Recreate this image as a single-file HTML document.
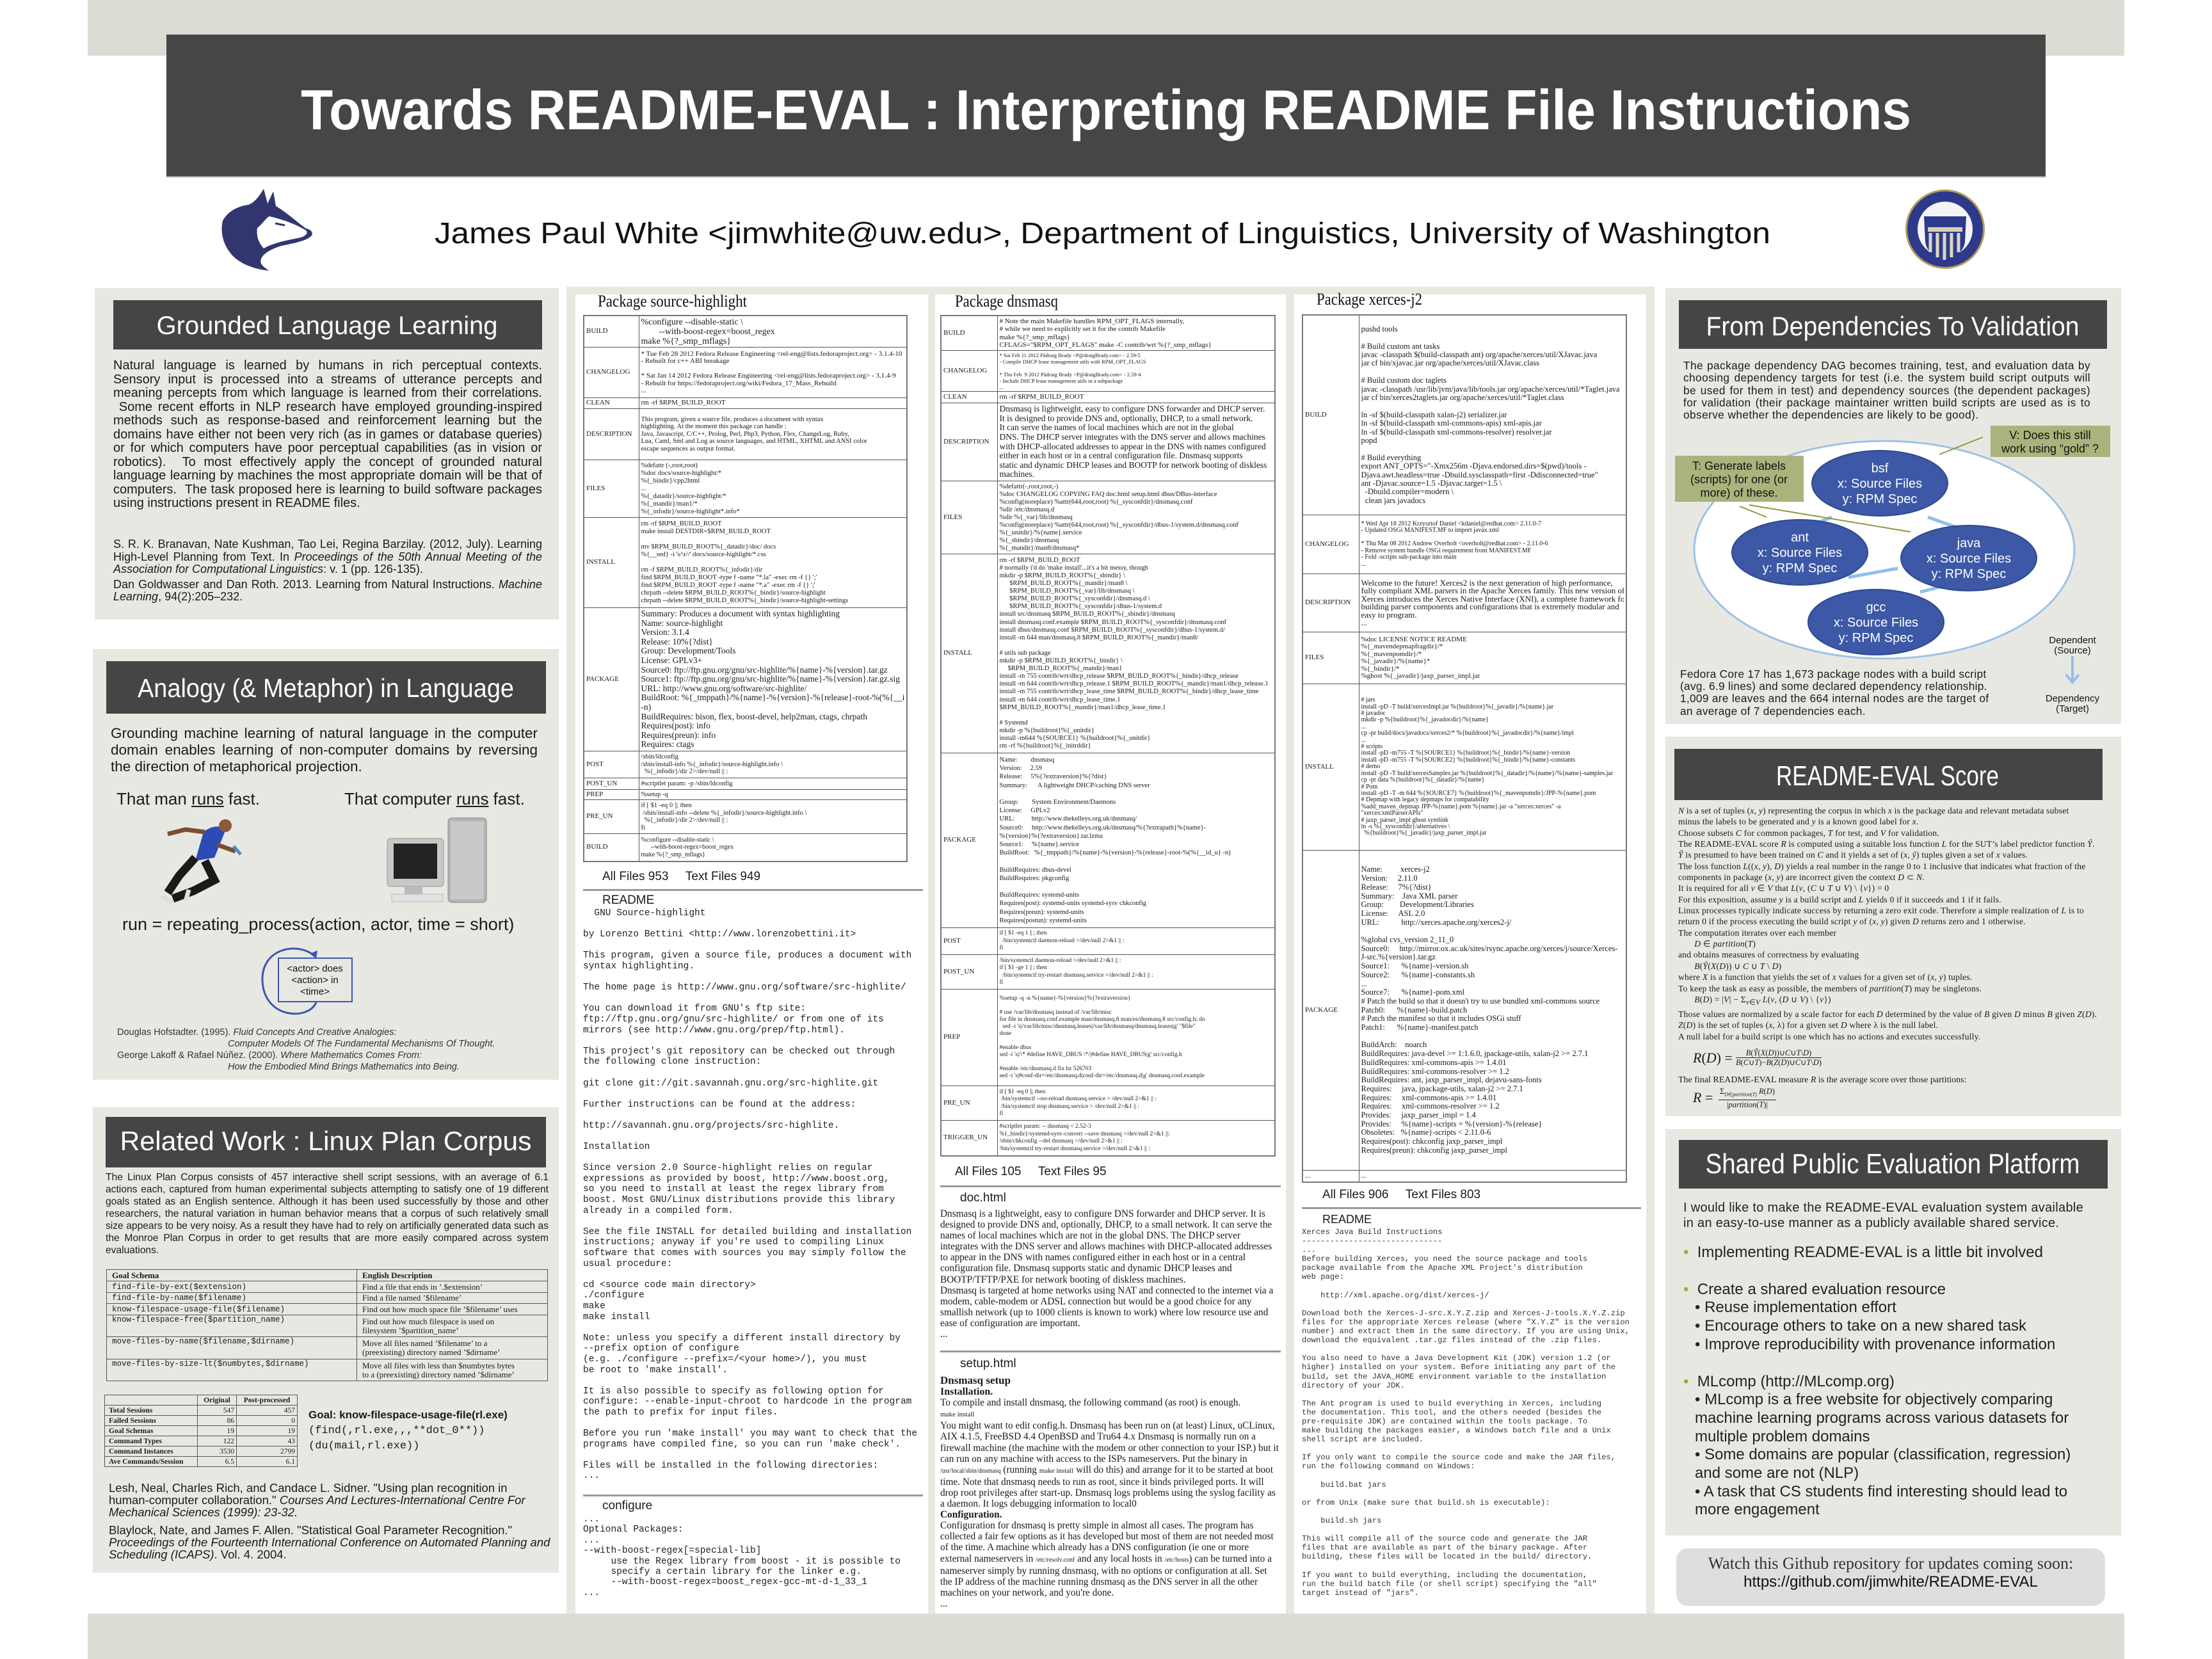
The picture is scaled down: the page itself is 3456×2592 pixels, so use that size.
<!DOCTYPE html>
<html><head><meta charset="utf-8">
<style>
*{margin:0;padding:0;box-sizing:border-box}
body{width:3456px;height:2592px;background:#fff;position:relative;overflow:hidden;font-family:"Liberation Sans",sans-serif;color:#1a1a1a}
.a{position:absolute}
.pn{position:absolute;background:#e8e8e3}
.bar{position:absolute;background:#454545}
.j{text-align:justify}
table.t{position:absolute;border-collapse:collapse;table-layout:fixed;font-family:"Liberation Serif",serif;border:2px solid #777}
table.t td{border:1px solid #555;vertical-align:middle;padding:0 3px;overflow:hidden}
table.t td.l{font-size:11px}
table.t td div{overflow:hidden;display:flex;flex-direction:column;justify-content:center;white-space:nowrap}
.mono{font-family:"Liberation Mono",monospace;white-space:pre}
.sr{font-family:"Liberation Serif",serif}
.rule{position:absolute;height:3px;background:#9a9a9a}
.sub{font-size:20px}
.dot{color:#8db33a}
</style></head><body>

<!-- top band & bottom strip -->
<div class="a" style="left:137px;top:0;width:3182px;height:87px;background:#dcdcd5"></div>
<div class="a" style="left:137px;top:2521px;width:3182px;height:71px;background:#dcdcd5"></div>
<div class="a" style="left:260px;top:54px;width:2936px;height:223px;background:#464646;border-bottom:2px solid #999"></div>

<!-- panels -->
<div class="pn" style="left:148px;top:450px;width:725px;height:518px"></div>
<div class="pn" style="left:145px;top:1014px;width:728px;height:673px"></div>
<div class="pn" style="left:145px;top:1730px;width:728px;height:727px"></div>
<div class="pn" style="left:885px;top:448px;width:1700px;height:2073px"></div>
<div class="a" style="left:899px;top:460px;width:551px;height:2061px;background:#fff"></div>
<div class="a" style="left:1461px;top:460px;width:548px;height:2061px;background:#fff"></div>
<div class="a" style="left:2022px;top:460px;width:550px;height:2061px;background:#fff"></div>
<div class="pn" style="left:2602px;top:450px;width:712px;height:681px"></div>
<div class="pn" style="left:2602px;top:1151px;width:712px;height:593px"></div>
<div class="pn" style="left:2602px;top:1764px;width:712px;height:635px"></div>

<div class="bar" style="left:177px;top:469px;width:670px;height:77px"></div>
<div class="bar" style="left:166px;top:1033px;width:687px;height:82px"></div>
<div class="bar" style="left:165px;top:1745px;width:688px;height:79px"></div>
<div class="bar" style="left:2623px;top:469px;width:669px;height:76px"></div>
<div class="bar" style="left:2616px;top:1170px;width:669px;height:80px"></div>
<div class="bar" style="left:2623px;top:1781px;width:670px;height:76px"></div>
<div class="a" style="left:2619px;top:2419px;width:670px;height:90px;background:#dedede;border-radius:18px"></div>

<!-- SVG overlay: headings, logos, diagrams -->
<svg class="a" style="left:0;top:0" width="3456" height="2592" xmlns="http://www.w3.org/2000/svg">
<g font-family="Liberation Sans, sans-serif" fill="#fff" text-anchor="middle">
<text x="1728" y="202" font-size="88" font-weight="bold" textLength="2516" lengthAdjust="spacingAndGlyphs">Towards README-EVAL : Interpreting README File Instructions</text>
<text x="511" y="522" font-size="40" textLength="533" lengthAdjust="spacingAndGlyphs">Grounded Language Learning</text>
<text x="509" y="1089" font-size="41" textLength="588" lengthAdjust="spacingAndGlyphs">Analogy (&amp; Metaphor) in Language</text>
<text x="509" y="1797" font-size="42" textLength="643" lengthAdjust="spacingAndGlyphs">Related Work : Linux Plan Corpus</text>
<text x="2957" y="524" font-size="42" textLength="583" lengthAdjust="spacingAndGlyphs">From Dependencies To Validation</text>
<text x="2949" y="1227" font-size="44" textLength="348" lengthAdjust="spacingAndGlyphs">README-EVAL Score</text>
<text x="2957" y="1833" font-size="44" textLength="585" lengthAdjust="spacingAndGlyphs">Shared Public Evaluation Platform</text>
</g>
<text x="679" y="380" font-family="Liberation Sans, sans-serif" font-size="46" fill="#111" textLength="2087" lengthAdjust="spacingAndGlyphs">James Paul White &lt;jimwhite@uw.edu&gt;, Department of Linguistics, University of Washington</text>
<g font-family="Liberation Serif, serif" font-size="26" fill="#111">
<text x="934" y="479" textLength="233" lengthAdjust="spacingAndGlyphs">Package source-highlight</text>
<text x="1492" y="479" textLength="161" lengthAdjust="spacingAndGlyphs">Package dnsmasq</text>
<text x="2057" y="476" textLength="165" lengthAdjust="spacingAndGlyphs">Package xerces-j2</text>
</g>
<!-- husky -->
<path d="M412,295 L418,318 L427,299 L431,322 C445,330 462,345 478,357 C484,358 490,362 487,368 C480,376 460,380 440,384 C420,390 404,400 408,412 C412,418 418,421 420,423 C395,420 375,412 362,398 C348,382 344,362 348,345 C356,330 372,322 388,320 C398,316 404,308 412,295 Z" fill="#33366e"/>
<path d="M420,338 C440,342 462,350 478,360 C482,364 478,368 470,371 C452,375 430,378 412,388 C404,380 400,368 402,356 C408,352 412,345 420,338 Z" fill="#fff"/>
<path d="M430,349 L445,352" stroke="#33366e" stroke-width="3"/>
<!-- seal -->
<circle cx="3039" cy="358" r="62" fill="#b59a5a"/>
<circle cx="3039" cy="358" r="59" fill="#2d3a8c"/>
<circle cx="3039" cy="358" r="43" fill="#f4f4f8"/>
<path d="M3006,338 L3072,338 L3070,378 C3068,395 3050,405 3039,410 C3028,405 3010,395 3008,378 Z" fill="#2d3a8c"/>
<rect x="3012" y="355" width="54" height="7" fill="#d8d0b0"/>
<path d="M3016,364 v30 M3027,364 v38 M3038,364 v42 M3049,364 v38 M3060,364 v30" stroke="#ddd6bd" stroke-width="5"/>
<!-- dependency diagram -->
<ellipse cx="2944" cy="859" rx="297" ry="170" fill="#fff" stroke="#9cc3e6" stroke-width="3"/>
<g stroke="#8fc0ea" stroke-width="5" fill="none">
<path d="M2862,808 L2815,826"/><path d="M3012,808 L3063,826"/><path d="M2888,902 L2965,888"/><path d="M3074,906 L3000,925"/>
</g>
<g stroke="#8a9a3a" stroke-width="2" fill="none"><path d="M2718,791 L2760,808"/><path d="M2733,789 L2985,831"/><path d="M3098,683 L3030,710"/></g>
<g fill="#3c58a6" stroke="#2e4a90" stroke-width="2">
<ellipse cx="2937" cy="755" rx="106" ry="51"/><ellipse cx="2812" cy="863" rx="106" ry="51"/>
<ellipse cx="3076" cy="872" rx="106" ry="51"/><ellipse cx="2931" cy="972" rx="106" ry="51"/>
</g>
<g font-family="Liberation Sans, sans-serif" font-size="20" fill="#fff" text-anchor="middle">
<text x="2937" y="738">bsf</text><text x="2937" y="762">x: Source Files</text><text x="2937" y="786">y: RPM Spec</text>
<text x="2812" y="846">ant</text><text x="2812" y="870">x: Source Files</text><text x="2812" y="894">y: RPM Spec</text>
<text x="3076" y="855">java</text><text x="3076" y="879">x: Source Files</text><text x="3076" y="903">y: RPM Spec</text>
<text x="2931" y="955">gcc</text><text x="2931" y="979">x: Source Files</text><text x="2931" y="1003">y: RPM Spec</text>
</g>
<rect x="2617" y="712" width="201" height="72" fill="#a9b47c"/>
<rect x="3110" y="665" width="187" height="49" fill="#a9b47c"/>
<g font-family="Liberation Sans, sans-serif" font-size="18" fill="#111" text-anchor="middle">
<text x="2717" y="734">T: Generate labels</text><text x="2717" y="755">(scripts) for one (or</text><text x="2717" y="776">more) of these.</text>
<text x="3203" y="686">V: Does this still</text><text x="3203" y="707">work using “gold” ?</text>
<text x="3238" y="1005" font-size="15">Dependent</text><text x="3238" y="1021" font-size="15">(Source)</text>
<text x="3238" y="1096" font-size="15">Dependency</text><text x="3238" y="1112" font-size="15">(Target)</text>
</g>
<path d="M3238,1025 L3238,1065 M3228,1054 L3238,1066 L3248,1054" stroke="#8fc0ea" stroke-width="4" fill="none"/>
<!-- cycle -->
<path d="M494,1566 C482,1595 412,1592 410,1532 C408,1482 465,1470 492,1494" stroke="#3b57b0" stroke-width="3" fill="none"/>
<path d="M484,1490 L494,1498 L496,1485 Z" fill="#3b57b0"/>
<rect x="435" y="1497" width="115" height="68" fill="#e8e8e3" stroke="#3b57b0" stroke-width="2"/>
<g font-family="Liberation Sans, sans-serif" font-size="15" fill="#111" text-anchor="middle">
<text x="492" y="1518">&lt;actor&gt; does</text><text x="492" y="1536">&lt;action&gt; in</text><text x="492" y="1554">&lt;time&gt;</text></g>
<!-- runner -->
<g>
<path d="M318,1300 C330,1290 345,1288 352,1298 L335,1340 L305,1345 Z" fill="#2b4bb5"/>
<circle cx="352" cy="1290" r="10" fill="#8a5a3a"/>
<path d="M320,1300 L290,1296 L262,1303 M340,1320 L368,1330" stroke="#7a4e30" stroke-width="7" fill="none"/>
<path d="M305,1340 L280,1368 L262,1395 M320,1345 L335,1375 L302,1392 L270,1404" stroke="#1a1a1a" stroke-width="13" fill="none"/>
<path d="M252,1400 L270,1410 M295,1390 L290,1408" stroke="#ddd" stroke-width="7"/>
<path d="M365,1322 L376,1335" stroke="#4a8fd0" stroke-width="5"/>
</g>
<!-- computer -->
<g>
<rect x="605" y="1310" width="88" height="75" rx="5" fill="#c8c8c8" stroke="#999"/>
<rect x="615" y="1318" width="68" height="55" fill="#222"/>
<rect x="632" y="1385" width="28" height="12" fill="#bbb"/>
<rect x="612" y="1397" width="80" height="12" fill="#e2e2e2" stroke="#bbb"/>
<rect x="700" y="1278" width="60" height="132" rx="6" fill="#b5b5b5" stroke="#888"/>
<rect x="704" y="1283" width="52" height="122" fill="#c9c9c9"/>
</g>
</svg>

<!-- Panel 1 -->
<div class="a j" style="left:177px;top:561px;width:670px;font-size:20px;line-height:21.5px">Natural language is learned by humans in rich perceptual contexts. Sensory input is processed into a streams of utterance percepts and meaning percepts from which language is learned from their correlations. &nbsp;Some recent efforts in NLP research have employed grounding-inspired methods such as response-based and reinforcement learning but the domains have either not been very rich (as in games or database queries) or for which computers have poor perceptual capabilities (as in vision or robotics). &nbsp;To most effectively apply the concept of grounded natural language learning by machines the most appropriate domain will be that of computers. &nbsp;The task proposed here is learning to build software packages using instructions present in README files.</div>
<div class="a j" style="left:177px;top:841px;width:670px;font-size:18px;line-height:19.5px">S. R. K. Branavan, Nate Kushman, Tao Lei, Regina Barzilay. (2012, July). Learning High-Level Planning from Text. In <i>Proceedings of the 50th Annual Meeting of the Association for Computational Linguistics</i>: v. 1 (pp. 126-135).<div style="height:4px"></div>Dan Goldwasser and Dan Roth. 2013. Learning from Natural Instructions. <i>Machine Learning</i>, 94(2):205–232.</div>

<!-- Panel 2 -->
<div class="a j" style="left:173px;top:1133px;width:667px;font-size:22.5px;line-height:26px">Grounding machine learning of natural language in the computer domain enables learning of non-computer domains by reversing the direction of metaphorical projection.</div>
<div class="a" style="left:182px;top:1233px;font-size:26px">That man <u>runs</u> fast.</div>
<div class="a" style="left:538px;top:1233px;font-size:26px">That computer <u>runs</u> fast.</div>
<div class="a" style="left:191px;top:1429px;font-size:27px">run = repeating_process(action, actor, time = short)</div>
<div class="a" style="left:183px;top:1604px;font-size:14.5px;line-height:18px;color:#333">Douglas Hofstadter. (1995). <i>Fluid Concepts And Creative Analogies:</i><br><i style="padding-left:173px">Computer Models Of The Fundamental Mechanisms Of Thought.</i><br>George Lakoff &amp; Rafael Núñez. (2000). <i>Where Mathematics Comes From:</i><br><i style="padding-left:173px">How the Embodied Mind Brings Mathematics into Being.</i></div>

<!-- Panel 3 -->
<div class="a j" style="left:165px;top:1830px;width:692px;font-size:15.6px;line-height:19px">The Linux Plan Corpus consists of 457 interactive shell script sessions, with an average of 6.1 actions each, captured from human experimental subjects attempting to satisfy one of 19 different goals stated as an English sentence. Although it has been used successfully by those and other researchers, the natural variation in human behavior means that a corpus of such relatively small size appears to be very noisy. As a result they have had to rely on artificially generated data such as the Monroe Plan Corpus in order to get results that are more easily compared across system evaluations.</div>
<table class="t" style="left:166px;top:1983px;width:690px;font-size:13px;line-height:14px;border:1px solid #333">
<col style="width:391px"><col>
<tr><td style="height:18px;padding-left:8px"><b>Goal Schema</b></td><td style="padding-left:8px"><b>English Description</b></td></tr>
<tr><td class="mono" style="height:18px;padding-left:8px;font-size:12.5px">find-file-by-ext($extension)</td><td style="padding-left:8px">Find a file that ends in ’.$extension’</td></tr>
<tr><td class="mono" style="height:17px;padding-left:8px;font-size:12.5px">find-file-by-name($filename)</td><td style="padding-left:8px">Find a file named ’$filename’</td></tr>
<tr><td class="mono" style="height:18px;padding-left:8px;font-size:12.5px">know-filespace-usage-file($filename)</td><td style="padding-left:8px">Find out how much space file ’$filename’ uses</td></tr>
<tr><td class="mono" style="height:34px;padding-left:8px;font-size:12.5px;vertical-align:top">know-filespace-free($partition_name)</td><td style="padding-left:8px">Find out how much filespace is used on<br>filesystem ’$partition_name’</td></tr>
<tr><td class="mono" style="height:35px;padding-left:8px;font-size:12.5px;vertical-align:top">move-files-by-name($filename,$dirname)</td><td style="padding-left:8px">Move all files named ’$filename’ to a<br>(preexisting) directory named ’$dirname’</td></tr>
<tr><td class="mono" style="height:34px;padding-left:8px;font-size:12.5px;vertical-align:top">move-files-by-size-lt($numbytes,$dirname)</td><td style="padding-left:8px">Move all files with less than $numbytes bytes<br>to a (preexisting) directory named ’$dirname’</td></tr>
</table>
<table class="t" style="left:163px;top:2179px;width:302px;font-size:11.5px;line-height:12px;border:1px solid #333">
<col style="width:145px"><col style="width:61px"><col>
<tr><td style="height:16px"></td><td style="text-align:center"><b>Original</b></td><td style="text-align:center"><b>Post-processed</b></td></tr>
<tr><td style="height:16px;padding-left:6px"><b>Total Sessions</b></td><td style="text-align:right">547</td><td style="text-align:right">457</td></tr>
<tr><td style="height:16px;padding-left:6px"><b>Failed Sessions</b></td><td style="text-align:right">86</td><td style="text-align:right">0</td></tr>
<tr><td style="height:16px;padding-left:6px"><b>Goal Schemas</b></td><td style="text-align:right">19</td><td style="text-align:right">19</td></tr>
<tr><td style="height:16px;padding-left:6px"><b>Command Types</b></td><td style="text-align:right">122</td><td style="text-align:right">43</td></tr>
<tr><td style="height:16px;padding-left:6px"><b>Command Instances</b></td><td style="text-align:right">3530</td><td style="text-align:right">2799</td></tr>
<tr><td style="height:16px;padding-left:6px"><b>Ave Commands/Session</b></td><td style="text-align:right">6.5</td><td style="text-align:right">6.1</td></tr>
</table>
<div class="a" style="left:482px;top:2200px;font-size:17px;line-height:22.5px"><b>Goal: know-filespace-usage-file(rl.exe)</b><br><span class="mono" style="font-size:17px">(find(,rl.exe,,,**dot_0**))<br>(du(mail,rl.exe))</span></div>
<div class="a" style="left:170px;top:2315px;width:690px;font-size:18.5px;line-height:19px">Lesh, Neal, Charles Rich, and Candace L. Sidner. "Using plan recognition in human-computer collaboration." <i>Courses And Lectures-International Centre For Mechanical Sciences (1999): 23-32.</i><div style="height:9px"></div>Blaylock, Nate, and James F. Allen. "Statistical Goal Parameter Recognition." <i>Proceedings of the Fourteenth International Conference on Automated Planning and Scheduling (ICAPS)</i>. Vol. 4. 2004.</div>

<!-- Column 1: source-highlight -->
<table class="t" style="left:911px;top:492px;width:507px;font-size:11px;line-height:11.5px">
<col style="width:86px"><col>
<tr><td class="l">BUILD</td><td><div style="height:48px;font-size:14px;line-height:15px">%configure --disable-static \<br>&nbsp;&nbsp;&nbsp;&nbsp;&nbsp;&nbsp;&nbsp;&nbsp;--with-boost-regex=boost_regex<br>make %{?_smp_mflags}</div></td></tr>
<tr><td class="l">CHANGELOG</td><td><div style="height:78px">* Tue Feb 28 2012 Fedora Release Engineering &lt;rel-eng@lists.fedoraproject.org&gt; - 3.1.4-10<br>- Rebuilt for c++ ABI breakage<br><br>* Sat Jan 14 2012 Fedora Release Engineering &lt;rel-eng@lists.fedoraproject.org&gt; - 3.1.4-9<br>- Rebuilt for https://fedoraproject.org/wiki/Fedora_17_Mass_Rebuild<br>...</div></td></tr>
<tr><td class="l">CLEAN</td><td><div style="height:16px">rm -rf $RPM_BUILD_ROOT</div></td></tr>
<tr><td class="l">DESCRIPTION</td><td><div style="height:79px;font-size:10.5px">This program, given a source file, produces a document with syntax<br>highlighting. At the moment this package can handle :<br>Java, Javascript, C/C++, Prolog, Perl, Php3, Python, Flex, ChangeLog, Ruby,<br>Lua, Caml, Sml and Log as source languages, and HTML, XHTML and ANSI color<br>escape sequences as output format.</div></td></tr>
<tr><td class="l">FILES</td><td><div style="height:89px;font-size:10.5px;line-height:12px">%defattr (-,root,root)<br>%doc docs/source-highlight/*<br>%{_bindir}/cpp2html<br>...<br>%{_datadir}/source-highlight/*<br>%{_mandir}/man1/*<br>%{_infodir}/source-highlight*.info*</div></td></tr>
<tr><td class="l">INSTALL</td><td><div style="height:140px;font-size:10.5px;line-height:12px">rm -rf $RPM_BUILD_ROOT<br>make install DESTDIR=$RPM_BUILD_ROOT<br><br>mv $RPM_BUILD_ROOT%{_datadir}/doc/ docs<br>%{__sed} -i 's/\r//' docs/source-highlight/*.css<br><br>rm -f $RPM_BUILD_ROOT%{_infodir}/dir<br>find $RPM_BUILD_ROOT -type f -name "*.la" -exec rm -f {} ';'<br>find $RPM_BUILD_ROOT -type f -name "*.a" -exec rm -f {} ';'<br>chrpath --delete $RPM_BUILD_ROOT%{_bindir}/source-highlight<br>chrpath --delete $RPM_BUILD_ROOT%{_bindir}/source-highlight-settings</div></td></tr>
<tr><td class="l">PACKAGE</td><td><div style="height:223px;font-size:13.5px;line-height:14.6px">Summary: Produces a document with syntax highlighting<br>Name: source-highlight<br>Version: 3.1.4<br>Release: 10%{?dist}<br>Group: Development/Tools<br>License: GPLv3+<br>Source0: ftp://ftp.gnu.org/gnu/src-highlite/%{name}-%{version}.tar.gz<br>Source1: ftp://ftp.gnu.org/gnu/src-highlite/%{name}-%{version}.tar.gz.sig<br>URL: http://www.gnu.org/software/src-highlite/<br>BuildRoot: %{_tmppath}/%{name}-%{version}-%{release}-root-%(%{__id_u}<br>-n)<br>BuildRequires: bison, flex, boost-devel, help2man, ctags, chrpath<br>Requires(post): info<br>Requires(preun): info<br>Requires: ctags</div></td></tr>
<tr><td class="l">POST</td><td><div style="height:41px;font-size:10.5px">/sbin/ldconfig<br>/sbin/install-info %{_infodir}/source-highlight.info \<br>&nbsp;&nbsp;%{_infodir}/dir 2&gt;/dev/null || :</div></td></tr>
<tr><td class="l">POST_UN</td><td><div style="height:17px;font-size:10.5px">#scriptlet param: -p /sbin/ldconfig</div></td></tr>
<tr><td class="l">PREP</td><td><div style="height:15px;font-size:10.5px">%setup -q</div></td></tr>
<tr><td class="l">PRE_UN</td><td><div style="height:52px;font-size:10.5px">if [ $1 -eq 0 ]; then<br>&nbsp;/sbin/install-info --delete %{_infodir}/source-highlight.info \<br>&nbsp;&nbsp;%{_infodir}/dir 2&gt;/dev/null || :<br>fi</div></td></tr>
<tr><td class="l">BUILD</td><td><div style="height:42px;font-size:10px">%configure --disable-static \<br>&nbsp;&nbsp;&nbsp;&nbsp;&nbsp;&nbsp;--with-boost-regex=boost_regex<br>make %{?_smp_mflags}</div></td></tr>
</table>
<div class="a sub" style="left:941px;top:1359px;font-size:19px">All Files 953 &nbsp;&nbsp;&nbsp;&nbsp;Text Files 949</div>
<div class="rule" style="left:911px;top:1389px;width:531px"></div>
<div class="a" style="left:941px;top:1396px;font-size:19px">README</div>
<div class="a mono" style="left:911px;top:1419px;font-size:14.5px;line-height:16.6px;color:#222">  GNU Source-highlight

by Lorenzo Bettini &lt;http://www.lorenzobettini.it&gt;

This program, given a source file, produces a document with
syntax highlighting.

The home page is http://www.gnu.org/software/src-highlite/

You can download it from GNU's ftp site:
ftp://ftp.gnu.org/gnu/src-highlite/ or from one of its
mirrors (see http://www.gnu.org/prep/ftp.html).

This project's git repository can be checked out through
the following clone instruction:

git clone git://git.savannah.gnu.org/src-highlite.git

Further instructions can be found at the address:

http://savannah.gnu.org/projects/src-highlite.

Installation

Since version 2.0 Source-highlight relies on regular
expressions as provided by boost, http://www.boost.org,
so you need to install at least the regex library from
boost. Most GNU/Linux distributions provide this library
already in a compiled form.

See the file INSTALL for detailed building and installation
instructions; anyway if you're used to compiling Linux
software that comes with sources you may simply follow the
usual procedure:

cd &lt;source code main directory&gt;
./configure
make
make install

Note: unless you specify a different install directory by
--prefix option of configure
(e.g. ./configure --prefix=/&lt;your home&gt;/), you must
be root to 'make install'.

It is also possible to specify as following option for
configure: --enable-input-chroot to hardcode in the program
the path to prefix for input files.

Before you run 'make install' you may want to check that the
programs have compiled fine, so you can run 'make check'.

Files will be installed in the following directories:
...</div>
<div class="rule" style="left:911px;top:2335px;width:531px"></div>
<div class="a" style="left:941px;top:2342px;font-size:19px">configure</div>
<div class="a mono" style="left:911px;top:2366px;font-size:14.5px;line-height:16.4px;color:#222">...
Optional Packages:
...
--with-boost-regex[=special-lib]
     use the Regex library from boost - it is possible to
     specify a certain library for the linker e.g.
     --with-boost-regex=boost_regex-gcc-mt-d-1_33_1
...</div>

<!-- Column 2: dnsmasq -->
<table class="t" style="left:1469px;top:492px;width:524px;font-size:11px;line-height:11.5px">
<col style="width:88px"><col>
<tr><td class="l">BUILD</td><td><div style="height:53px;font-size:11px;line-height:12.5px"># Note the main Makefile handles RPM_OPT_FLAGS internally,<br># while we need to explicitly set it for the contrib Makefile<br>make %{?_smp_mflags}<br>CFLAGS="$RPM_OPT_FLAGS" make -C contrib/wrt %{?_smp_mflags}</div></td></tr>
<tr><td class="l">CHANGELOG</td><td><div style="height:63px;font-size:8.5px;line-height:10px">* Sat Feb 11 2012 Pádraig Brady &lt;P@draigBrady.com&gt; - 2.59-5<br>- Compile DHCP lease management utils with RPM_OPT_FLAGS<br><br>* Thu Feb &nbsp;9 2012 Pádraig Brady &lt;P@draigBrady.com&gt; - 2.59-4<br>- Include DHCP lease management utils in a subpackage<br>...</div></td></tr>
<tr><td class="l">CLEAN</td><td><div style="height:17px">rm -rf $RPM_BUILD_ROOT</div></td></tr>
<tr><td class="l">DESCRIPTION</td><td><div style="height:121px;font-size:13.5px;line-height:14.6px">Dnsmasq is lightweight, easy to configure DNS forwarder and DHCP server.<br>It is designed to provide DNS and, optionally, DHCP, to a small network.<br>It can serve the names of local machines which are not in the global<br>DNS. The DHCP server integrates with the DNS server and allows machines<br>with DHCP-allocated addresses to appear in the DNS with names configured<br>either in each host or in a central configuration file. Dnsmasq supports<br>static and dynamic DHCP leases and BOOTP for network booting of diskless<br>machines.</div></td></tr>
<tr><td class="l">FILES</td><td><div style="height:113px;font-size:10.5px;line-height:12px">%defattr(-,root,root,-)<br>%doc CHANGELOG COPYING FAQ doc.html setup.html dbus/DBus-interface<br>%config(noreplace) %attr(644,root,root) %{_sysconfdir}/dnsmasq.conf<br>%dir /etc/dnsmasq.d<br>%dir %{_var}/lib/dnsmasq<br>%config(noreplace) %attr(644,root,root) %{_sysconfdir}/dbus-1/system.d/dnsmasq.conf<br>%{_unitdir}/%{name}.service<br>%{_sbindir}/dnsmasq<br>%{_mandir}/man8/dnsmasq*</div></td></tr>
<tr><td class="l">INSTALL</td><td><div style="height:310px;font-size:10.5px;line-height:12.1px">rm -rf $RPM_BUILD_ROOT<br># normally i'd do 'make install'...it's a bit messy, though<br>mkdir -p $RPM_BUILD_ROOT%{_sbindir} \<br>&nbsp;&nbsp;&nbsp;&nbsp;&nbsp;&nbsp;$RPM_BUILD_ROOT%{_mandir}/man8 \<br>&nbsp;&nbsp;&nbsp;&nbsp;&nbsp;&nbsp;$RPM_BUILD_ROOT%{_var}/lib/dnsmasq \<br>&nbsp;&nbsp;&nbsp;&nbsp;&nbsp;&nbsp;$RPM_BUILD_ROOT%{_sysconfdir}/dnsmasq.d \<br>&nbsp;&nbsp;&nbsp;&nbsp;&nbsp;&nbsp;$RPM_BUILD_ROOT%{_sysconfdir}/dbus-1/system.d<br>install src/dnsmasq $RPM_BUILD_ROOT%{_sbindir}/dnsmasq<br>install dnsmasq.conf.example $RPM_BUILD_ROOT%{_sysconfdir}/dnsmasq.conf<br>install dbus/dnsmasq.conf $RPM_BUILD_ROOT%{_sysconfdir}/dbus-1/system.d/<br>install -m 644 man/dnsmasq.8 $RPM_BUILD_ROOT%{_mandir}/man8/<br><br># utils sub package<br>mkdir -p $RPM_BUILD_ROOT%{_bindir} \<br>&nbsp;&nbsp;&nbsp;&nbsp;&nbsp;$RPM_BUILD_ROOT%{_mandir}/man1<br>install -m 755 contrib/wrt/dhcp_release $RPM_BUILD_ROOT%{_bindir}/dhcp_release<br>install -m 644 contrib/wrt/dhcp_release.1 $RPM_BUILD_ROOT%{_mandir}/man1/dhcp_release.1<br>install -m 755 contrib/wrt/dhcp_lease_time $RPM_BUILD_ROOT%{_bindir}/dhcp_lease_time<br>install -m 644 contrib/wrt/dhcp_lease_time.1<br>$RPM_BUILD_ROOT%{_mandir}/man1/dhcp_lease_time.1<br><br># Systemd<br>mkdir -p %{buildroot}%{_unitdir}<br>install -m644 %{SOURCE1} %{buildroot}%{_unitdir}<br>rm -rf %{buildroot}%{_initrddir}</div></td></tr>
<tr><td class="l">PACKAGE</td><td><div style="height:272px;font-size:10.5px;line-height:13.2px">Name: &nbsp;&nbsp;&nbsp;&nbsp;&nbsp;&nbsp;&nbsp;dnsmasq<br>Version: &nbsp;&nbsp;&nbsp;&nbsp;2.59<br>Release: &nbsp;&nbsp;&nbsp;&nbsp;5%{?extraversion}%{?dist}<br>Summary: &nbsp;&nbsp;&nbsp;&nbsp;&nbsp;A lightweight DHCP/caching DNS server<br><br>Group: &nbsp;&nbsp;&nbsp;&nbsp;&nbsp;&nbsp;&nbsp;System Environment/Daemons<br>License: &nbsp;&nbsp;&nbsp;&nbsp;GPLv2<br>URL: &nbsp;&nbsp;&nbsp;&nbsp;&nbsp;&nbsp;&nbsp;&nbsp;&nbsp;http://www.thekelleys.org.uk/dnsmasq/<br>Source0: &nbsp;&nbsp;&nbsp;&nbsp;http://www.thekelleys.org.uk/dnsmasq/%{?extrapath}%{name}-<br>%{version}%{?extraversion}.tar.lzma<br>Source1: &nbsp;&nbsp;&nbsp;&nbsp;%{name}.service<br>BuildRoot: &nbsp;&nbsp;%{_tmppath}/%{name}-%{version}-%{release}-root-%(%{__id_u} -n)<br><br>BuildRequires: dbus-devel<br>BuildRequires: pkgconfig<br><br>BuildRequires: systemd-units<br>Requires(post): systemd-units systemd-sysv chkconfig<br>Requires(preun): systemd-units<br>Requires(postun): systemd-units</div></td></tr>
<tr><td class="l">POST</td><td><div style="height:41px;font-size:9.5px">if [ $1 -eq 1 ] ; then<br>&nbsp;&nbsp;/bin/systemctl daemon-reload &gt;/dev/null 2&gt;&amp;1 || :<br>fi</div></td></tr>
<tr><td class="l">POST_UN</td><td><div style="height:53px;font-size:9.5px">/bin/systemctl daemon-reload &gt;/dev/null 2&gt;&amp;1 || :<br>if [ $1 -ge 1 ] ; then<br>&nbsp;&nbsp;/bin/systemctl try-restart dnsmasq.service &gt;/dev/null 2&gt;&amp;1 || :<br>fi</div></td></tr>
<tr><td class="l">PREP</td><td><div style="height:150px;font-size:9.5px;line-height:11px">%setup -q -n %{name}-%{version}%{?extraversion}<br><br># use /var/lib/dnsmasq instead of /var/lib/misc<br>for file in dnsmasq.conf.example man/dnsmasq.8 man/es/dnsmasq.8 src/config.h; do<br>&nbsp;&nbsp;sed -i 's|/var/lib/misc/dnsmasq.leases|/var/lib/dnsmasq/dnsmasq.leases|g' "$file"<br>done<br><br>#enable dbus<br>sed -i 's|/\* #define HAVE_DBUS \*/|#define HAVE_DBUS|g' src/config.h<br><br>#enable /etc/dnsmasq.d fix bz 526703<br>sed -i 's|#conf-dir=/etc/dnsmasq.d|conf-dir=/etc/dnsmasq.d|g' dnsmasq.conf.example</div></td></tr>
<tr><td class="l">PRE_UN</td><td><div style="height:53px;font-size:9.5px">if [ $1 -eq 0 ]; then<br>&nbsp;/bin/systemctl --no-reload dnsmasq.service &gt; /dev/null 2&gt;&amp;1 || :<br>&nbsp;/bin/systemctl stop dnsmasq.service &gt; /dev/null 2&gt;&amp;1 || :<br>fi</div></td></tr>
<tr><td class="l">TRIGGER_UN</td><td><div style="height:54px;font-size:9.5px">#scriptlet param: -- dnsmasq &lt; 2.52-3<br>%{_bindir}/systemd-sysv-convert --save dnsmasq &gt;/dev/null 2&gt;&amp;1 ||:<br>/sbin/chkconfig --del dnsmasq &gt;/dev/null 2&gt;&amp;1 || :<br>/bin/systemctl try-restart dnsmasq.service &gt;/dev/null 2&gt;&amp;1 || :</div></td></tr>
</table>
<div class="a" style="left:1492px;top:1820px;font-size:19px">All Files 105 &nbsp;&nbsp;&nbsp;&nbsp;Text Files 95</div>
<div class="rule" style="left:1469px;top:1852px;width:532px"></div>
<div class="a" style="left:1500px;top:1861px;font-size:19px">doc.html</div>
<div class="a sr" style="left:1469px;top:1888px;width:530px;font-size:15.3px;line-height:17.1px">Dnsmasq is a lightweight, easy to configure DNS forwarder and DHCP server. It is designed to provide DNS and, optionally, DHCP, to a small network. It can serve the names of local machines which are not in the global DNS. The DHCP server integrates with the DNS server and allows machines with DHCP-allocated addresses to appear in the DNS with names configured either in each host or in a central configuration file. Dnsmasq supports static and dynamic DHCP leases and BOOTP/TFTP/PXE for network booting of diskless machines.<br>Dnsmasq is targeted at home networks using NAT and connected to the internet via a modem, cable-modem or ADSL connection but would be a good choice for any smallish network (up to 1000 clients is known to work) where low resource use and ease of configuration are important.<br>...</div>
<div class="rule" style="left:1469px;top:2110px;width:532px"></div>
<div class="a" style="left:1500px;top:2120px;font-size:19px">setup.html</div>
<div class="a sr" style="left:1469px;top:2148px;width:530px;font-size:15.3px;line-height:17.1px"><b style="font-size:17px">Dnsmasq setup</b><br><b style="font-size:16px">Installation.</b><br>To compile and install dnsmasq, the following command (as root) is enough.<br><span style="font-size:11px">make install</span><br>You might want to edit config.h. Dnsmasq has been run on (at least) Linux, uCLinux, AIX 4.1.5, FreeBSD 4.4 OpenBSD and Tru64 4.x Dnsmasq is normally run on a firewall machine (the machine with the modem or other connection to your ISP.) but it can run on any machine with access to the ISPs nameservers. Put the binary in <span style="font-size:10px">/usr/local/sbin/dnsmasq</span> (running <span style="font-size:11px">make install</span> will do this) and arrange for it to be started at boot time. Note that dnsmasq needs to run as root, since it binds privileged ports. It will drop root privileges after start-up. Dnsmasq logs problems using the syslog facility as a daemon. It logs debugging information to local0<br><b>Configuration.</b><br>Configuration for dnsmasq is pretty simple in almost all cases. The program has collected a fair few options as it has developed but most of them are not needed most of the time. A machine which already has a DNS configuration (ie one or more external nameservers in <span style="font-size:10px">/etc/resolv.conf</span> and any local hosts in <span style="font-size:10px">/etc/hosts</span>) can be turned into a nameserver simply by running dnsmasq, with no options or configuration at all. Set the IP address of the machine running dnsmasq as the DNS server in all the other machines on your network, and you're done.<br>...</div>

<!-- Column 3: xerces-j2 -->
<table class="t" style="left:2034px;top:491px;width:508px;font-size:12.5px;line-height:11.5px">
<col style="width:88px"><col>
<tr><td class="l">BUILD</td><td><div style="height:311px;line-height:13.4px">pushd tools<br><br># Build custom ant tasks<br>javac -classpath $(build-classpath ant) org/apache/xerces/util/XJavac.java<br>jar cf bin/xjavac.jar org/apache/xerces/util/XJavac.class<br><br># Build custom doc taglets<br>javac -classpath /usr/lib/jvm/java/lib/tools.jar org/apache/xerces/util/*Taglet.java<br>jar cf bin/xerces2taglets.jar org/apache/xerces/util/*Taglet.class<br><br>ln -sf $(build-classpath xalan-j2) serializer.jar<br>ln -sf $(build-classpath xml-commons-apis) xml-apis.jar<br>ln -sf $(build-classpath xml-commons-resolver) resolver.jar<br>popd<br><br># Build everything<br>export ANT_OPTS="-Xmx256m -Djava.endorsed.dirs=$(pwd)/tools -<br>Djava.awt.headless=true -Dbuild.sysclasspath=first -Ddisconnected=true"<br>ant -Djavac.source=1.5 -Djavac.target=1.5 \<br>&nbsp;&nbsp;-Dbuild.compiler=modern \<br>&nbsp;&nbsp;clean jars javadocs</div></td></tr>
<tr><td class="l">CHANGELOG</td><td><div style="height:91px;font-size:10px;line-height:10.5px">* Wed Apr 18 2012 Krzysztof Daniel &lt;kdaniel@redhat.com&gt; 2.11.0-7<br>- Updated OSGi MANIFEST.MF to import javax.xml<br><br>* Thu Mar 08 2012 Andrew Overholt &lt;overholt@redhat.com&gt; - 2.11.0-6<br>- Remove system bundle OSGi requirement from MANIFEST.MF<br>- Fold -scripts sub-package into main<br>...</div></td></tr>
<tr><td class="l">DESCRIPTION</td><td><div style="height:90px;font-size:13px;line-height:12.5px">Welcome to the future! Xerces2 is the next generation of high performance,<br>fully compliant XML parsers in the Apache Xerces family. This new version of<br>Xerces introduces the Xerces Native Interface (XNI), a complete framework for<br>building parser components and configurations that is extremely modular and<br>easy to program.<br>...</div></td></tr>
<tr><td class="l">FILES</td><td><div style="height:80px;font-size:11px;line-height:11.5px">%doc LICENSE NOTICE README<br>%{_mavendepmapfragdir}/*<br>%{_mavenpomdir}/*<br>%{_javadir}/%{name}*<br>%{_bindir}/*<br>%ghost %{_javadir}/jaxp_parser_impl.jar</div></td></tr>
<tr><td class="l">INSTALL</td><td><div style="height:259px;font-size:10px;line-height:10.4px"># jars<br>install -pD -T build/xercesImpl.jar %{buildroot}%{_javadir}/%{name}.jar<br># javadoc<br>mkdir -p %{buildroot}%{_javadocdir}/%{name}<br>...<br>cp -pr build/docs/javadocs/xerces2/* %{buildroot}%{_javadocdir}/%{name}/impl<br>...<br># scripts<br>install -pD -m755 -T %{SOURCE1} %{buildroot}%{_bindir}/%{name}-version<br>install -pD -m755 -T %{SOURCE2} %{buildroot}%{_bindir}/%{name}-constants<br># demo<br>install -pD -T build/xercesSamples.jar %{buildroot}%{_datadir}/%{name}/%{name}-samples.jar<br>cp -pr data %{buildroot}%{_datadir}/%{name}<br># Pom<br>install -pD -T -m 644 %{SOURCE7} %{buildroot}%{_mavenpomdir}/JPP-%{name}.pom<br># Depmap with legacy depmaps for compatability<br>%add_maven_depmap JPP-%{name}.pom %{name}.jar -a "xerces:xerces" -a<br>"xerces:xmlParserAPIs"<br># jaxp_parser_impl ghost symlink<br>ln -s %{_sysconfdir}/alternatives \<br>&nbsp;&nbsp;%{buildroot}%{_javadir}/jaxp_parser_impl.jar</div></td></tr>
<tr><td class="l">PACKAGE</td><td><div style="height:499px;font-size:12.5px;line-height:13.7px">Name: &nbsp;&nbsp;&nbsp;&nbsp;&nbsp;&nbsp;&nbsp;&nbsp;xerces-j2<br>Version: &nbsp;&nbsp;&nbsp;&nbsp;2.11.0<br>Release: &nbsp;&nbsp;&nbsp;&nbsp;7%{?dist}<br>Summary: &nbsp;&nbsp;&nbsp;Java XML parser<br>Group: &nbsp;&nbsp;&nbsp;&nbsp;&nbsp;&nbsp;&nbsp;Development/Libraries<br>License: &nbsp;&nbsp;&nbsp;&nbsp;ASL 2.0<br>URL: &nbsp;&nbsp;&nbsp;&nbsp;&nbsp;&nbsp;&nbsp;&nbsp;&nbsp;&nbsp;http://xerces.apache.org/xerces2-j/<br><br>%global cvs_version 2_11_0<br>Source0: &nbsp;&nbsp;&nbsp;&nbsp;http://mirror.ox.ac.uk/sites/rsync.apache.org/xerces/j/source/Xerces-<br>J-src.%{version}.tar.gz<br>Source1: &nbsp;&nbsp;&nbsp;&nbsp;&nbsp;%{name}-version.sh<br>Source2: &nbsp;&nbsp;&nbsp;&nbsp;&nbsp;%{name}-constants.sh<br>...<br>Source7: &nbsp;&nbsp;&nbsp;&nbsp;&nbsp;%{name}-pom.xml<br># Patch the build so that it doesn't try to use bundled xml-commons source<br>Patch0: &nbsp;&nbsp;&nbsp;&nbsp;&nbsp;%{name}-build.patch<br># Patch the manifest so that it includes OSGi stuff<br>Patch1: &nbsp;&nbsp;&nbsp;&nbsp;&nbsp;%{name}-manifest.patch<br><br>BuildArch: &nbsp;&nbsp;&nbsp;noarch<br>BuildRequires: java-devel &gt;= 1:1.6.0, jpackage-utils, xalan-j2 &gt;= 2.7.1<br>BuildRequires: xml-commons-apis &gt;= 1.4.01<br>BuildRequires: xml-commons-resolver &gt;= 1.2<br>BuildRequires: ant, jaxp_parser_impl, dejavu-sans-fonts<br>Requires: &nbsp;&nbsp;&nbsp;&nbsp;java, jpackage-utils, xalan-j2 &gt;= 2.7.1<br>Requires: &nbsp;&nbsp;&nbsp;&nbsp;xml-commons-apis &gt;= 1.4.01<br>Requires: &nbsp;&nbsp;&nbsp;&nbsp;xml-commons-resolver &gt;= 1.2<br>Provides: &nbsp;&nbsp;&nbsp;&nbsp;jaxp_parser_impl = 1.4<br>Provides: &nbsp;&nbsp;&nbsp;&nbsp;%{name}-scripts = %{version}-%{release}<br>Obsoletes: &nbsp;&nbsp;%{name}-scripts &lt; 2.11.0-6<br>Requires(post): chkconfig jaxp_parser_impl<br>Requires(preun): chkconfig jaxp_parser_impl</div></td></tr>
<tr><td class="l" style="height:18px">...</td><td style="font-size:10px">...</td></tr>
</table>
<div class="a" style="left:2066px;top:1856px;font-size:19px">All Files 906 &nbsp;&nbsp;&nbsp;&nbsp;Text Files 803</div>
<div class="rule" style="left:2034px;top:1886px;width:530px"></div>
<div class="a" style="left:2066px;top:1895px;font-size:18px">README</div>
<div class="a mono" style="left:2034px;top:1918px;font-size:12.2px;line-height:14.1px;color:#333">Xerces Java Build Instructions
------------------------------
...
Before building Xerces, you need the source package and tools
package available from the Apache XML Project's distribution
web page:

    http://xml.apache.org/dist/xerces-j/

Download both the Xerces-J-src.X.Y.Z.zip and Xerces-J-tools.X.Y.Z.zip
files for the appropriate Xerces release (where "X.Y.Z" is the version
number) and extract them in the same directory. If you are using Unix,
download the equivalent .tar.gz files instead of the .zip files.

You also need to have a Java Development Kit (JDK) version 1.2 (or
higher) installed on your system. Before initiating any part of the
build, set the JAVA_HOME environment variable to the installation
directory of your JDK.

The Ant program is used to build everything in Xerces, including
the documentation. This tool, and the others needed (besides the
pre-requisite JDK) are contained within the tools package. To
make building the packages easier, a Windows batch file and a Unix
shell script are included.

If you only want to compile the source code and make the JAR files,
run the following command on Windows:

    build.bat jars

or from Unix (make sure that build.sh is executable):

    build.sh jars

This will compile all of the source code and generate the JAR
files that are available as part of the binary package. After
building, these files will be located in the build/ directory.

If you want to build everything, including the documentation,
run the build batch file (or shell script) specifying the "all"
target instead of "jars".</div>

<!-- Right panel A text -->
<div class="a j" style="left:2630px;top:562px;width:636px;font-size:17.3px;line-height:19.3px;letter-spacing:0.4px">The package dependency DAG becomes training, test, and evaluation data by choosing dependency targets for test (i.e. the system build script outputs will be used for them in test) and dependency sources (the dependent packages) for validation (their package maintainer written build scripts are used as is to observe whether the dependencies are likely to be good).</div>
<div class="a" style="left:2625px;top:1044px;width:490px;font-size:17.3px;line-height:19.2px;letter-spacing:0.3px">Fedora Core 17 has 1,673 package nodes with a build script (avg. 6.9 lines) and some declared dependency relationship. 1,009 are leaves and the 664 internal nodes are the target of an average of 7 dependencies each.</div>

<!-- Right panel B -->
<div class="a sr" style="left:2622px;top:1258px;font-size:13.6px;line-height:17.35px;white-space:nowrap;letter-spacing:0.2px">
<i>N</i> is a set of tuples (<i>x, y</i>) representing the corpus in which <i>x</i> is the package data and relevant metadata subset<br>
minus the labels to be generated and <i>y</i> is a known good label for <i>x</i>.<br>
Choose subsets <i>C</i> for common packages, <i>T</i> for test, and <i>V</i> for validation.<br>
The README-EVAL score <i>R</i> is computed using a suitable loss function <i>L</i> for the SUT’s label predictor function <i>Ŷ</i>.<br>
<i>Ŷ</i> is presumed to have been trained on <i>C</i> and it yields a set of (<i>x, ŷ</i>) tuples given a set of <i>x</i> values.<br>
The loss function <i>L</i>((<i>x, y</i>), <i>D</i>) yields a real number in the range 0 to 1 inclusive that indicates what fraction of the<br>
components in package (<i>x, y</i>) are incorrect given the context <i>D</i> ⊂ <i>N</i>.<br>
It is required for all <i>v</i> ∈ <i>V</i> that <i>L</i>(<i>v</i>, (<i>C</i> ∪ <i>T</i> ∪ <i>V</i>) \ {<i>v</i>}) = 0<br>
For this exposition, assume <i>y</i> is a build script and <i>L</i> yields 0 if it succeeds and 1 if it fails.<br>
Linux processes typically indicate success by returning a zero exit code. Therefore a simple realization of <i>L</i> is to<br>
return 0 if the process executing the build script <i>y</i> of (<i>x, y</i>) given <i>D</i> returns zero and 1 otherwise.<br>
The computation iterates over each member<br>
&nbsp;&nbsp;&nbsp;&nbsp;&nbsp;&nbsp;&nbsp;<i>D</i> ∈ <i>partition</i>(<i>T</i>)<br>
and obtains measures of correctness by evaluating<br>
&nbsp;&nbsp;&nbsp;&nbsp;&nbsp;&nbsp;&nbsp;<i>B</i>(<i>Ŷ</i>(<i>X</i>(<i>D</i>)) ∪ <i>C</i> ∪ <i>T</i> \ <i>D</i>)<br>
where <i>X</i> is a function that yields the set of <i>x</i> values for a given set of (<i>x, y</i>) tuples.<br>
To keep the task as easy as possible, the members of <i>partition</i>(<i>T</i>) may be singletons.<br>
&nbsp;&nbsp;&nbsp;&nbsp;&nbsp;&nbsp;&nbsp;<i>B</i>(<i>D</i>) = |<i>V</i>| − Σ<sub><i>v</i>∈<i>V</i></sub> <i>L</i>(<i>v</i>, (<i>D</i> ∪ <i>V</i>) \ {<i>v</i>})<br>
Those values are normalized by a scale factor for each <i>D</i> determined by the value of <i>B</i> given <i>D</i> minus <i>B</i> given <i>Z</i>(<i>D</i>).<br>
<i>Z</i>(<i>D</i>) is the set of tuples (<i>x</i>, λ) for a given set <i>D</i> where λ is the null label.<br>
A null label for a build script is one which has no actions and executes successfully.</div>
<div class="a sr" style="left:2645px;top:1640px;font-size:22px"><i>R</i>(<i>D</i>) =</div>
<div class="a sr" style="left:2712px;top:1638px;font-size:12.5px;text-align:center;line-height:14px"><div style="border-bottom:1px solid #222;padding:0 2px"><i>B</i>(<i>Ŷ</i>(<i>X</i>(<i>D</i>))∪<i>C</i>∪<i>T</i>\<i>D</i>)</div><i>B</i>(<i>C</i>∪<i>T</i>)−<i>B</i>(<i>Z</i>(<i>D</i>)∪<i>C</i>∪<i>T</i>\<i>D</i>)</div>
<div class="a sr" style="left:2622px;top:1680px;font-size:14px">The final README-EVAL measure <i>R</i> is the average score over those partitions:</div>
<div class="a sr" style="left:2645px;top:1702px;font-size:22px"><i>R</i> =</div>
<div class="a sr" style="left:2685px;top:1698px;font-size:12.5px;text-align:center;line-height:14px"><div style="border-bottom:1px solid #222;padding:0 2px">Σ<sub style="font-size:8px"><i>D</i>∈<i>partition</i>(<i>T</i>)</sub> <i>R</i>(<i>D</i>)</div>|<i>partition</i>(<i>T</i>)|</div>

<!-- Right panel C -->
<div class="a" style="left:2630px;top:1875px;font-size:20px;line-height:24px;letter-spacing:0.3px;color:#222">I would like to make the README-EVAL evaluation system available<br>in an easy-to-use manner as a publicly available shared service.</div>
<div class="a" style="left:2630px;top:1943px;font-size:24px;line-height:28.7px;color:#222;white-space:nowrap">
<div><span class="dot">•</span>&nbsp; Implementing README-EVAL is a little bit involved</div>
<div style="height:29px"></div>
<div><span class="dot">•</span>&nbsp; Create a shared evaluation resource</div>
<div style="padding-left:18px">• Reuse implementation effort</div>
<div style="padding-left:18px">• Encourage others to take on a new shared task</div>
<div style="padding-left:18px">• Improve reproducibility with provenance information</div>
<div style="height:29px"></div>
<div><span class="dot">•</span>&nbsp; MLcomp (http://MLcomp.org)</div>
<div style="padding-left:18px">• MLcomp is a free website for objectively comparing<br>machine learning programs across various datasets for<br>multiple problem domains</div>
<div style="padding-left:18px">• Some domains are popular (classification, regression)<br>and some are not (NLP)</div>
<div style="padding-left:18px">• A task that CS students find interesting should lead to<br>more engagement</div>
</div>
<div class="a" style="left:2619px;top:2428px;width:670px;text-align:center;line-height:29px">
<div class="sr" style="font-size:26px;color:#333">Watch this Github repository for updates coming soon:</div>
<div style="font-size:24px;color:#111">https://github.com/jimwhite/README-EVAL</div></div>
</body></html>
